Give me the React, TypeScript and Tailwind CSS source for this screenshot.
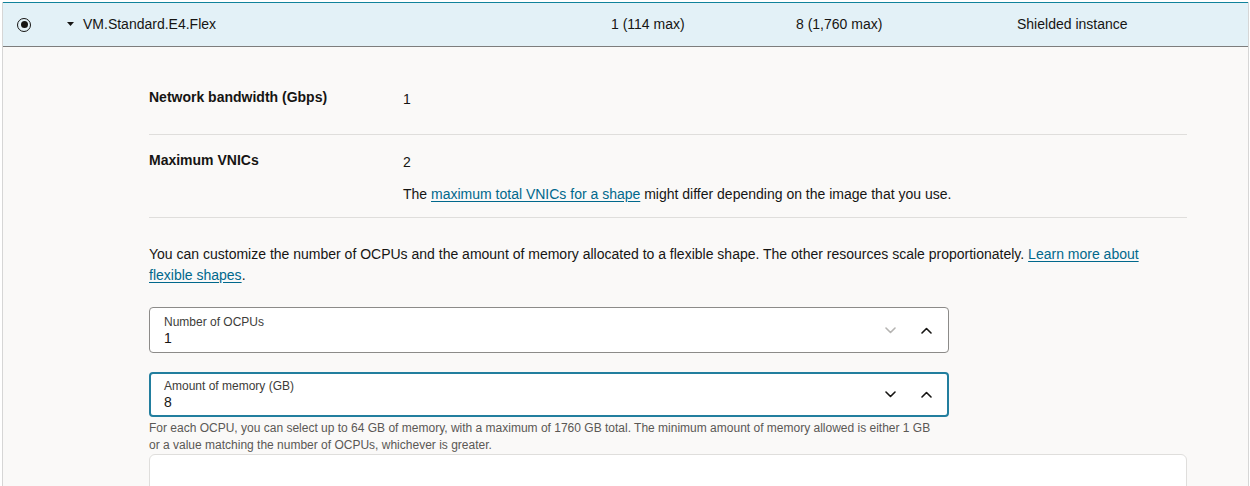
import React from "react";

function Chevron({ dir, color }: { dir: "up" | "down"; color: string }) {
  return (
    <svg width="11" height="7" viewBox="0 0 11 7" fill="none">
      {dir === "down" ? (
        <polyline points="1,1 5.5,5.5 10,1" stroke={color} strokeWidth="1.6" strokeLinecap="round" strokeLinejoin="round" />
      ) : (
        <polyline points="1,6 5.5,1.5 10,6" stroke={color} strokeWidth="1.6" strokeLinecap="round" strokeLinejoin="round" />
      )}
    </svg>
  );
}

export default function App() {
  return (
    <div
      className="bg-white pt-[2px] pl-[2px] pr-[1px] h-[486px] overflow-hidden text-[#161513]"
      style={{ fontFamily: '"Liberation Sans", Arial, sans-serif' }}
    >
      <div className="border-x border-[#d6d6d6] h-full bg-[#faf9f8]">
        {/* Header row */}
        <div className="h-[45px] bg-[#e3f1f7] border-t border-t-[#10829b] border-b border-b-[#7d7d7d] flex items-center text-[14px]">
          <div className="ml-[14px] w-[14px] h-[14px] rounded-full border-[1.5px] border-[#161513] flex items-center justify-center">
            <div className="w-[7px] h-[7px] rounded-full bg-[#161513]" />
          </div>
          <svg className="ml-[36px] mt-[-2px]" width="7" height="4" viewBox="0 0 7 4">
            <polygon points="0,0 7,0 3.5,4" fill="#161513" />
          </svg>
          <div className="ml-[9px] w-[528px]">VM.Standard.E4.Flex</div>
          <div className="w-[185px]">1 (114 max)</div>
          <div className="w-[221px]">8 (1,760 max)</div>
          <div>Shielded instance</div>
        </div>

        {/* Content */}
        <div className="pl-[146px] pr-[61px] pt-[40px] text-[14px]">
          <div className="flex pb-[25px] border-b border-[#dfdedc] leading-[20px]">
            <div className="w-[254px] font-bold">Network bandwidth (Gbps)</div>
            <div className="pt-[2px]">1</div>
          </div>
          <div className="flex pt-[15px] pb-[13px] border-b border-[#dfdedc] leading-[20px]">
            <div className="w-[254px] font-bold">Maximum VNICs</div>
            <div className="pt-[2px]">
              <div>2</div>
              <div className="mt-[12px]">
                The{" "}
                <a className="text-[#00688c] underline underline-offset-2">maximum total VNICs for a shape</a>{" "}
                might differ depending on the image that you use.
              </div>
            </div>
          </div>

          <p className="mt-[26px] leading-[21px] pr-[30px]">
            You can customize the number of OCPUs and the amount of memory allocated to a flexible shape. The other resources
            scale proportionately.{" "}
            <a className="text-[#00688c] underline underline-offset-2">Learn more about flexible shapes</a>.
          </p>

          {/* Input 1 */}
          <div className="mt-[21px] w-[800px] h-[46px] bg-white border border-[#8c8b89] rounded-[4px] flex items-center pl-[14px] pr-[16px]">
            <div className="flex-1 pt-[1px]">
              <div className="text-[12px] leading-[15px] text-[#3d3c3a]">Number of OCPUs</div>
              <div className="text-[14px] leading-[17px]">1</div>
            </div>
            <div className="flex items-center gap-[25px]">
              <Chevron dir="down" color="#b5b4b2" />
              <Chevron dir="up" color="#161513" />
            </div>
          </div>

          {/* Input 2 */}
          <div className="mt-[19px] w-[800px] h-[45px] bg-white border-2 border-[#227e9e] rounded-[4px] flex items-center pl-[13px] pr-[15px]">
            <div className="flex-1">
              <div className="text-[12px] leading-[15px] text-[#3d3c3a]">Amount of memory (GB)</div>
              <div className="text-[14px] leading-[17px]">8</div>
            </div>
            <div className="flex items-center gap-[25px]">
              <Chevron dir="down" color="#161513" />
              <Chevron dir="up" color="#161513" />
            </div>
          </div>

          <p className="mt-[3px] w-[795px] text-[12px] leading-[17px] text-[#5a5855]">
            For each OCPU, you can select up to 64 GB of memory, with a maximum of 1760 GB total. The minimum amount of memory
            allowed is either 1 GB or a value matching the number of OCPUs, whichever is greater.
          </p>

          <div className="h-[80px] bg-white border border-[#dfdedc] rounded-[6px]" />
        </div>
      </div>
    </div>
  );
}
